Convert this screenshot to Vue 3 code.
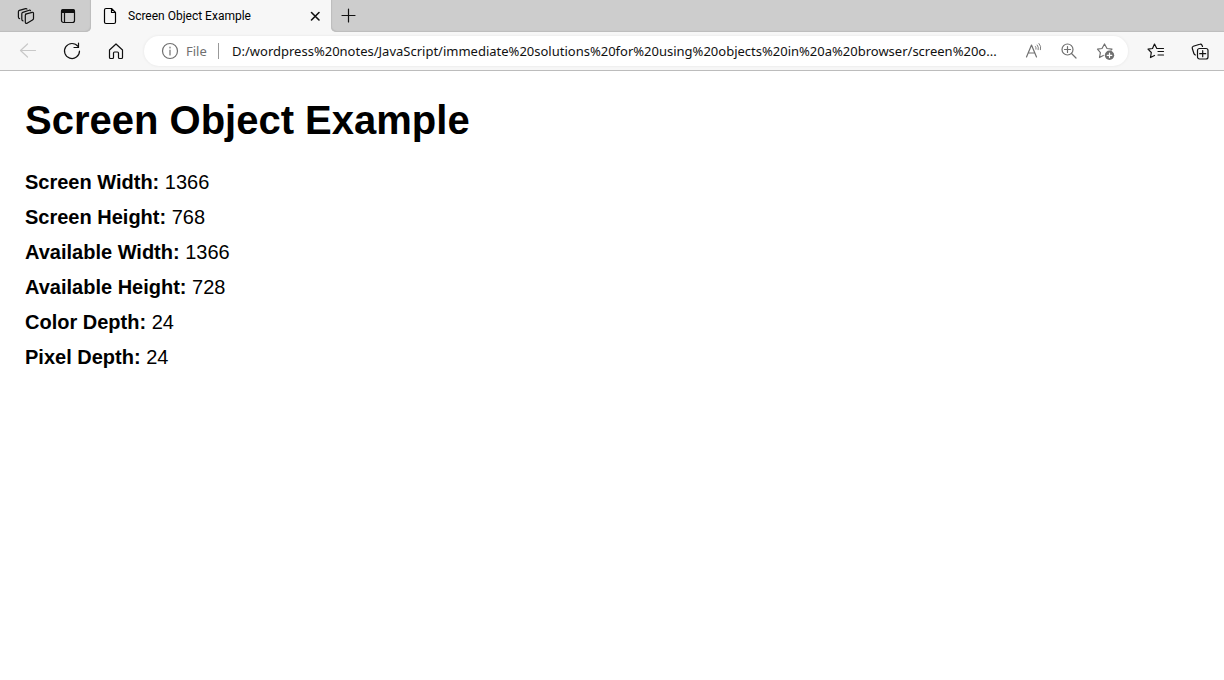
<script setup>
import { ref } from 'vue'

const address = ref('D:/wordpress%20notes/JavaScript/immediate%20solutions%20for%20using%20objects%20in%20a%20browser/screen%20o...')

const properties = [
  { name: 'Screen Width:', value: 1366 },
  { name: 'Screen Height:', value: 768 },
  { name: 'Available Width:', value: 1366 },
  { name: 'Available Height:', value: 728 },
  { name: 'Color Depth:', value: 24 },
  { name: 'Pixel Depth:', value: 24 },
]
</script>

<template>
  <div class="browser">
    <header class="chrome">
      <div class="tabstrip">
        <div class="strip-tools">
          <button class="strip-btn" type="button" aria-label="Workspaces">
            <svg class="icon" viewBox="0 0 20 20">
              <path d="M9.500 8.200l6.600-1.900q1.400-.3 1.400 1v5.200q0 1-1 1.400L11 17.300q-1.700.4-1.700-1.200V9.500q0-.9.800-1.300z" />
              <path d="M7 14.800q-1.200-.2-1.200-1.500V7.800q0-1 1-1.400l6.400-2.200q1-.2 1.300.5" />
              <path d="M3.600 12.600q-1.200-.3-1.200-1.600V5.800q0-1 1-1.400L9.600 2.600q1-.2 1.300.5" />
            </svg>
          </button>
          <button class="strip-btn" type="button" aria-label="Tab actions">
            <svg class="icon" viewBox="0 0 20 20">
              <rect x="3.500" y="3.500" width="13" height="13" rx="2" />
              <path class="solid edgeless" d="M3 7V5q0-2 2-2h10q2 0 2 2v2z" />
              <path d="M6.500 7v9.500" />
            </svg>
          </button>
        </div>
        <div class="tab">
          <svg class="icon" viewBox="0 0 20 20">
            <path d="M11.500 2.500H6q-1.500 0-1.500 1.500v12q0 1.500 1.500 1.500h8q1.500 0 1.500-1.500V6.500zM11.500 2.500v4h4" />
          </svg>
          <span class="tab-title">Screen Object Example</span>
          <button class="close" type="button" aria-label="Close tab">
            <svg class="icon bold" viewBox="0 0 20 20"><path d="M6.500 6.500l7.500 7.500M14 6.500l-7.500 7.500" /></svg>
          </button>
        </div>
        <button class="new-tab" type="button" aria-label="New tab">
          <svg class="icon" viewBox="0 0 20 20"><path d="M10.500 3v13M4 9.500h13" /></svg>
        </button>
      </div>

      <nav class="toolbar">
        <button class="tool" type="button" aria-label="Back" disabled>
          <svg class="icon" viewBox="0 0 20 20"><path d="M17.500 9.500h-15M9.500 3l-7 6.500 7 6.500" /></svg>
        </button>
        <button class="tool" type="button" aria-label="Refresh">
          <svg class="icon" viewBox="0 0 20 20"><path d="M16 5.500A7.500 7.500 0 1 0 17.500 10M16.500 2v4.500H12" /></svg>
        </button>
        <button class="tool" type="button" aria-label="Home">
          <svg class="icon" viewBox="0 0 20 20">
            <path d="M3.500 9L10 3l6.500 6v7.500q0 1-1 1h-2q-1 0-1-1v-4.500q0-1-1-1h-3q-1 0-1 1v4.500q0 1-1 1h-2q-1 0-1-1z" />
          </svg>
        </button>
        <div class="omnibox">
          <button class="site-info" type="button">
            <svg class="icon" viewBox="0 0 20 20">
              <circle cx="10" cy="10" r="7.500" />
              <path d="M10 9v5M10 6v1" />
            </svg>
            <span>File</span>
          </button>
          <input v-model="address" class="address" type="text" aria-label="Address" spellcheck="false" />
          <button class="omni-btn" type="button" aria-label="Read aloud">
            <svg class="icon" viewBox="0 0 20 20">
              <path d="M3.500 16L8.500 4l5 12M5.200 12h6.600" />
              <path class="fine" d="M12.500 5.500q1 1.200.5 2.700M14.200 4q1.800 2.200 1 4.700M16 2.500q2.600 2.800 1.500 6.200" />
            </svg>
          </button>
          <button class="omni-btn" type="button" aria-label="Zoom">
            <svg class="icon" viewBox="0 0 20 20">
              <circle cx="8.500" cy="8.500" r="5.500" />
              <path d="M12.500 12.500l4.500 4.500M8.500 5.500v6M5.500 8.500h6" />
            </svg>
          </button>
          <button class="omni-btn" type="button" aria-label="Add to favorites">
            <svg class="icon" viewBox="0 0 20 20">
              <path d="M8.300 14.500l-3.800 2 .9-4.900L2.500 8.200l4.500-.7L9.500 3l2.500 4.500 5 .7-1 1" />
              <circle class="solid edgeless" cx="14.500" cy="14.300" r="4.700" />
              <path class="knockout" d="M14.500 12v4.600M12.200 14.300h4.600" />
            </svg>
          </button>
        </div>
        <button class="tool" type="button" aria-label="Favorites">
          <svg class="icon" viewBox="0 0 20 20">
            <path d="M8.500 14.500l-4 2 .8-5L2 8.200l4.500-.7L8.500 3l2.300 4.500H17.500M12 10.500h5.500M12 14h5.500" />
          </svg>
        </button>
        <button class="tool" type="button" aria-label="Collections">
          <svg class="icon" viewBox="0 0 20 20">
            <rect x="7.500" y="7.500" width="10.500" height="10.500" rx="2" />
            <path d="M12.700 9.700v6M9.700 12.700h6M5.500 14q-1.200-.2-1.600-1.500L2.300 7.500q-.5-1.600 1-2.200l6.500-2q1.500-.5 2.200 1l.5 1.200" />
          </svg>
        </button>
      </nav>
    </header>

    <main class="page">
      <h1>Screen Object Example</h1>
      <p v-for="item in properties" :key="item.name">
        <strong>{{ item.name }}</strong> {{ item.value }}
      </p>
    </main>
  </div>
</template>

<style>
body {
  margin: 0;
  background: #fff;
}
</style>

<style scoped>
.browser {
  font-family: "Liberation Sans", Arial, sans-serif;
  color: #000;
}

.chrome {
  font-family: "Noto Sans", "Open Sans", sans-serif;
  background: #f7f7f7;
  border-bottom: 1px solid #bcbcbc;
}

button {
  display: flex;
  align-items: center;
  justify-content: center;
  margin: 0;
  padding: 0;
  border: 0;
  background: none;
  color: #111;
  font: inherit;
}

.icon {
  display: block;
  flex: none;
  width: 20px;
  height: 20px;
  fill: none;
  stroke: currentColor;
  stroke-width: 1.2;
  stroke-linecap: round;
  stroke-linejoin: round;
}

.bold {
  stroke-width: 1.6;
}

.fine {
  stroke-width: 0.9;
}

.solid {
  fill: currentColor;
}

.edgeless {
  stroke: none;
}

.knockout {
  stroke: #fff;
}

.tabstrip {
  display: flex;
  height: 32px;
  background: #f7f7f7;
}

.strip-tools {
  display: flex;
  padding: 0 2px 0 5px;
  background: #cdcdcd;
  border-radius: 0 0 5px 0;
  box-shadow: inset -1px -1px 1px #bdbdbd;
}

.strip-btn {
  width: 42px;
}

.tab {
  display: flex;
  align-items: center;
  width: 240px;
  padding: 0 6px 0 9px;
  box-sizing: border-box;
  background: #f7f7f7;
}

.tab-title {
  flex: 1;
  padding-left: 8px;
  font-family: Roboto, "Noto Sans", sans-serif;
  font-size: 12px;
  line-height: 20px;
  white-space: nowrap;
}

.new-tab {
  flex: 1;
  justify-content: flex-start;
  padding-left: 7px;
  background: #cdcdcd;
  border-radius: 0 0 0 5px;
  box-shadow: inset 1px -1px 1px #bdbdbd;
}

.toolbar {
  display: flex;
  align-items: center;
  height: 38px;
  padding: 0 2px 0 6px;
}

.tool {
  width: 44px;
  height: 32px;
}

.tool:disabled {
  color: #c8c8c8;
}

.omnibox {
  display: flex;
  flex: 1;
  align-items: center;
  min-width: 0;
  height: 30px;
  margin: 0 6px;
  padding: 0 5px 0 16px;
  box-sizing: border-box;
  background: #fff;
  border-radius: 15px;
  box-shadow: 0 0 2px 1px #eee;
}

.site-info {
  gap: 6px;
  width: 59px;
  height: 16px;
  justify-content: flex-start;
  border-right: 1px solid #999;
  color: #707070;
  font-size: 13px;
  box-sizing: border-box;
}

.address {
  flex: 1;
  min-width: 0;
  height: 24px;
  margin: 0;
  padding: 0 0 0 13px;
  border: 0;
  outline: 0;
  background: none;
  color: #111;
  font: inherit;
  font-size: 13px;
}

.omni-btn {
  width: 36px;
  height: 28px;
  color: #707070;
}

.page {
  padding: 21px 25px;
}

h1 {
  margin: 0 0 17px;
  font-size: 40px;
  line-height: 56px;
}

p {
  margin: 0;
  font-size: 20px;
  line-height: 35px;
}
</style>
